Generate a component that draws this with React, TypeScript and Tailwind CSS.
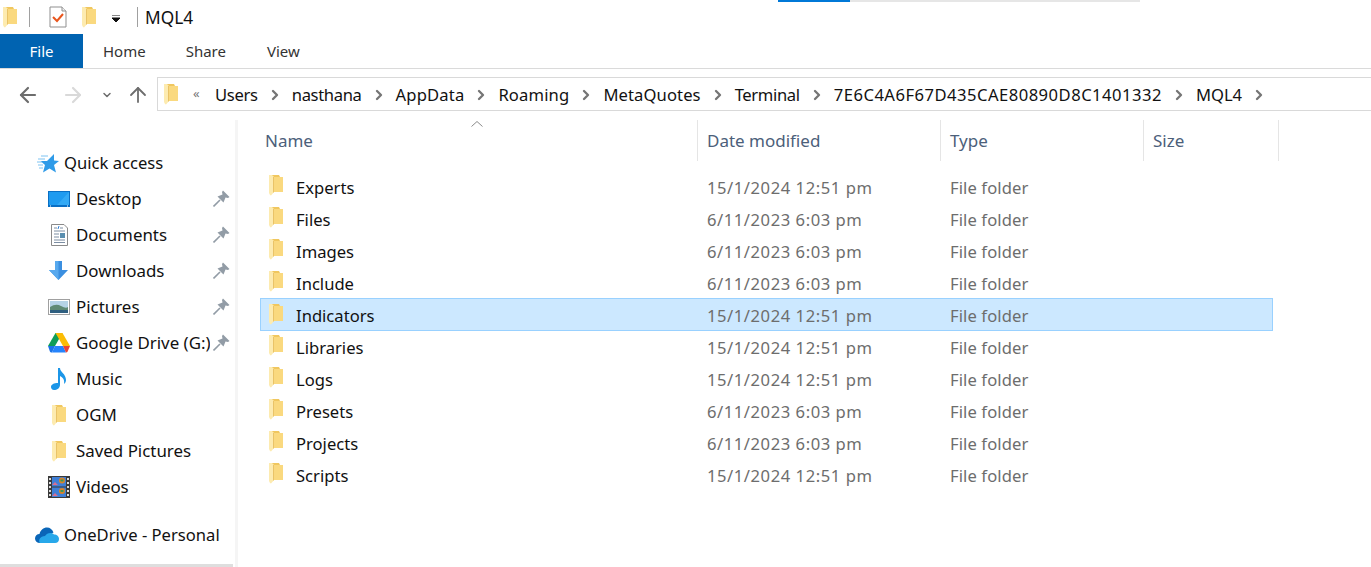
import React from 'react';
import { ArrowLeft, ArrowRight, ArrowUp, ChevronDown, ChevronRight } from 'lucide-react';

const font = "[font-family:'Noto_Sans','Open_Sans',sans-serif]";

function Folder({ className = '' }: { className?: string }) {
  return (
    <svg viewBox="0 0 14 21" className={`w-[14px] h-[21px] shrink-0 ${className}`}>
      <path d="M3 0 H10 L11 2 H14 V17 H3 Z" fill="#f0c75f" />
      <path d="M5 2 H14 V17 H5 Z" fill="#fad97f" />
      <path d="M0 0 H3 L5 2 V17 L2 20.5 L1 20 L0 18 Z" fill="#fdebb0" />
      <path d="M4 2 L5 2 V17 L4 18 Z" fill="#e9c368" />
    </svg>
  );
}

function TaskIcon() {
  return (
    <svg viewBox="0 0 18 22" className="w-[18px] h-[22px] shrink-0">
      <path d="M1 1 H13 L17 5 V21 H1 Z" fill="#fff" stroke="#8f8f8f" />
      <path d="M13 1 V5 H17" fill="#eee" stroke="#8f8f8f" />
      <path d="M4 11 L8 15 L14 8" fill="none" stroke="#e8551d" strokeWidth="2" />
    </svg>
  );
}

function StarIcon() {
  return (
    <svg viewBox="0 0 22 19" className="w-[22px] h-[19px] shrink-0">
      <path d="M17 0 L17 6.5 L22 7 L17 11 L19 18.5 L12.5 14.5 L6 18.5 L8 11 L3.5 7 L10 7 Z" fill="#2f9be8" />
      <path d="M4 2 H11 M1 5 H8 M0 8 H5 M1 11 H6 M2 14 H6" stroke="#7cc3f2" strokeWidth="1" />
    </svg>
  );
}

function DesktopIcon() {
  return (
    <svg viewBox="0 0 22 16" className="w-[22px] h-[16px] shrink-0">
      <rect width="22" height="16" fill="#0a6fc4" />
      <rect x="1" y="1" width="20" height="13" fill="#1f9bf0" />
      <path d="M9 14 L21 1 V14 Z" fill="#34aaf5" />
      <path d="M2 15 H3 M19 15 H20" stroke="#fff" />
    </svg>
  );
}

function DocumentsIcon() {
  return (
    <svg viewBox="0 0 17 22" className="w-[17px] h-[22px] shrink-0">
      <path d="M0.5 0.5 H13 L16.5 4 V21.5 H0.5 Z" fill="#fff" stroke="#8a8a8a" />
      <path d="M3 4 H6 M9 4 H12 M3 7 H14 M3 10 H8 M3 13 H8 M3 16 H14 M3 18.5 H14" stroke="#7c8ea3" />
      <path d="M7 5 L8 2" stroke="#2b7cd3" />
      <rect x="9" y="9" width="5" height="5" fill="#5a8fb0" />
    </svg>
  );
}

function DownloadsIcon() {
  return (
    <svg viewBox="0 0 20 20" className="w-[20px] h-[20px] shrink-0">
      <path d="M6 0 H13 V9 H19 L9.5 19 L0 9 H6 Z" fill="#3b8fe0" />
      <path d="M6 0 H9.5 V19 L0 9 H6 Z" fill="#58a9ee" />
    </svg>
  );
}

function PicturesIcon() {
  return (
    <svg viewBox="0 0 22 16" className="w-[22px] h-[16px] shrink-0">
      <rect x="0.5" y="0.5" width="21" height="15" fill="#fff" stroke="#a0a0a0" />
      <rect x="2" y="2" width="18" height="12" fill="#b5d3e6" />
      <path d="M2 8 Q8 4 13 7 T20 8 V14 H2 Z" fill="#5f8a74" />
      <path d="M2 11 H20 V14 H2 Z" fill="#2f5f80" />
    </svg>
  );
}

function DriveIcon() {
  return (
    <svg viewBox="0 0 22 20" className="w-[22px] h-[20px] shrink-0">
      <path d="M7.5 0 H14.5 L7 13 H0 Z" fill="#0f9d58" />
      <path d="M7.5 0 H14.5 L22 13 H15 Z" fill="#fbbc04" />
      <path d="M0 13 H7 L4 19.5 H3.2 Q2.4 19.5 2 18.8 Z" fill="#1a73e8" />
      <path d="M7 13 H15 L18 19.5 H4 Z" fill="#2684fc" />
      <path d="M15 13 H22 L19.5 18.8 Q19 19.5 18 19.5 Z" fill="#ea4335" />
    </svg>
  );
}

function MusicIcon() {
  return (
    <svg viewBox="0 0 16 22" className="w-[16px] h-[22px] shrink-0">
      <path d="M7 0 H9 C9 4 15 6 15 12 C15 14 14 15 13 16 C14 11 11 9 9 8 V17 C9 20 6 22 3 22 C1 22 0 20.5 0 19 C0 16.5 3 15 7 15 Z" fill="#1c96e8" />
    </svg>
  );
}

function VideosIcon() {
  return (
    <svg viewBox="0 0 22 22" className="w-[22px] h-[22px] shrink-0">
      <rect width="22" height="22" fill="#3a3a3a" />
      <rect x="4" y="1" width="14" height="9.5" fill="#3f7fd6" />
      <rect x="4" y="11.5" width="14" height="9.5" fill="#3f7fd6" />
      <circle cx="14" cy="4.5" r="3" fill="#d9842a" />
      <circle cx="14" cy="15" r="3" fill="#d9842a" />
      <path d="M12.5 3.5 H15.5 V5.5 H12.5 Z M12.5 14 H15.5 V16 H12.5 Z" fill="#3a9a5c" />
      <path d="M4 9 L7 6 L10 9 Z M4 20 L7 17 L10 20 Z" fill="#d86f8f" />
      <path d="M2 2 V20 M20 2 V20" stroke="#ddd" strokeWidth="2" strokeDasharray="2 2" />
    </svg>
  );
}

function CloudIcon() {
  return (
    <svg viewBox="0 0 24 16" className="w-[24px] h-[16px] shrink-0">
      <path d="M5 16 C2 16 0 14 0 11.5 C0 9 2 7 4.5 7 C5.5 3 8.5 0.5 12 0.5 C15 0.5 17.5 2.5 18.5 5.5 L10 10 Z" fill="#0a66b8" />
      <path d="M5 16 H20 C22.5 16 24 14.5 24 12 C24 9.5 22 7.5 19 7.5 C16 5 12 6 10 9 C8 9 5.5 10 4.5 12 C4 14 4 15.5 5 16 Z" fill="#28a8ea" />
    </svg>
  );
}

function PinIcon() {
  return (
    <svg viewBox="0 0 17 17" className="w-[17px] h-[17px] shrink-0">
      <path d="M10 0.5 L16.5 7 L15 8 L12.5 7.5 L10.5 12.5 L4.5 6.5 L9.5 4.5 L9 2 Z" fill="#929ca6" />
      <path d="M0.5 16.5 L7 10" stroke="#929ca6" strokeWidth="1.6" />
    </svg>
  );
}

type NavItem = { label: string; icon: React.ReactNode; pinned?: boolean };

const navItems: NavItem[] = [
  { label: 'Desktop', icon: <DesktopIcon />, pinned: true },
  { label: 'Documents', icon: <DocumentsIcon />, pinned: true },
  { label: 'Downloads', icon: <DownloadsIcon />, pinned: true },
  { label: 'Pictures', icon: <PicturesIcon />, pinned: true },
  { label: 'Google Drive (G:)', icon: <DriveIcon />, pinned: true },
  { label: 'Music', icon: <MusicIcon /> },
  { label: 'OGM', icon: <Folder /> },
  { label: 'Saved Pictures', icon: <Folder /> },
  { label: 'Videos', icon: <VideosIcon /> },
];

const crumbs = [
  { label: 'Users', cls: 'tracking-[-0.3px]' },
  { label: 'nasthana', cls: 'tracking-[-0.35px]' },
  { label: 'AppData', cls: 'tracking-[0.15px]' },
  { label: 'Roaming', cls: 'tracking-[0.15px]' },
  { label: 'MetaQuotes', cls: 'tracking-[0.1px]' },
  { label: 'Terminal', cls: 'tracking-[-0.35px]' },
  { label: '7E6C4A6F67D435CAE80890D8C1401332', cls: 'tracking-[0.48px]' },
  { label: 'MQL4', cls: '' },
];

const files = [
  { name: 'Experts', date: '15/1/2024 12:51 pm' },
  { name: 'Files', date: '6/11/2023 6:03 pm' },
  { name: 'Images', date: '6/11/2023 6:03 pm' },
  { name: 'Include', date: '6/11/2023 6:03 pm' },
  { name: 'Indicators', date: '15/1/2024 12:51 pm', selected: true },
  { name: 'Libraries', date: '15/1/2024 12:51 pm' },
  { name: 'Logs', date: '15/1/2024 12:51 pm' },
  { name: 'Presets', date: '6/11/2023 6:03 pm' },
  { name: 'Projects', date: '6/11/2023 6:03 pm' },
  { name: 'Scripts', date: '15/1/2024 12:51 pm' },
];

export default function App() {
  return (
    <div className={`relative w-[1371px] h-[567px] overflow-hidden bg-white text-[16.6px] text-[#111] ${font}`}>
      {/* copy progress strip */}
      <div className="absolute left-[778px] top-0 w-[362px] h-[2px] bg-[#e6e6e6]">
        <div className="w-[72px] h-[2px] bg-[#0078d7]" />
      </div>

      {/* title bar */}
      <div className="h-[34px] flex items-center pl-[3px]">
        <Folder />
        <div className="w-px h-[20px] bg-[#a0a0a0] ml-[12px]" />
        <div className="ml-[19px]"><TaskIcon /></div>
        <div className="ml-[15px]"><Folder /></div>
        <svg viewBox="0 0 8 7" className="w-[8px] h-[7px] ml-[16px] mt-[2px]">
          <path d="M0 0 H8 M0 3 H8 L4 7 Z" fill="#111" stroke="#111" strokeWidth="1" />
        </svg>
        <div className="w-px h-[20px] bg-[#a0a0a0] ml-[17px]" />
        <span className="ml-[7px] pt-[2px] text-[17.3px]">MQL4</span>
      </div>

      {/* ribbon tabs */}
      <div className="h-[35px] flex border-b border-[#dadada] text-[15px] text-[#333]">
        <div className="w-[83px] h-[34px] bg-[#0063b1] text-white flex items-center justify-center">File</div>
        <div className="ml-[20px] h-[34px] flex items-center">Home</div>
        <div className="ml-[40px] h-[34px] flex items-center">Share</div>
        <div className="ml-[41px] h-[34px] flex items-center">View</div>
      </div>

      {/* address row */}
      <div className="h-[51px] flex items-start pt-[8px]">
        <div className="w-[157px] h-[34px] flex items-center shrink-0 pt-[2px]">
          <ArrowLeft size={24} className="ml-[16px] text-[#6d6d6d] shrink-0" strokeWidth={2.2} />
          <ArrowRight size={24} className="ml-[21px] text-[#d9d9d9] shrink-0" strokeWidth={2.2} />
          <ChevronDown size={12} className="ml-[16px] text-[#6d6d6d] shrink-0" strokeWidth={3} />
          <ArrowUp size={24} className="ml-[13px] text-[#6d6d6d] shrink-0" strokeWidth={1.8} />
        </div>
        <div className="flex-1 h-[34px] flex items-center border-y border-l border-[#d9d9d9] pl-[6px]">
          <Folder />
          <span className="ml-[15px] w-[22px] text-[13px] text-[#777]">«</span>
          {crumbs.map((c) => (
            <div key={c.label} className="flex items-center pt-[2px]">
              <span className={c.cls}>{c.label}</span>
              <ChevronRight size={16} className="mx-[9px] text-[#757575]" strokeWidth={3.5} />
            </div>
          ))}
        </div>
      </div>

      <div className="flex h-[447px]">
        {/* nav pane */}
        <div className="relative w-[238px] shrink-0 border-r-[3px] border-[#f5f5f5] pt-[25px]">
          <div className="h-[36px] pl-[37px] flex items-center gap-[5px]">
            <StarIcon />
            <span>Quick access</span>
          </div>
          {navItems.map((item) => (
            <div key={item.label} className="h-[36px] flex items-center pl-[48px]">
              <div className="w-[22px] flex justify-center shrink-0">{item.icon}</div>
              <span className="ml-[6px] w-[134px] whitespace-nowrap overflow-hidden text-[16.9px]">{item.label}</span>
              {item.pinned && <div className="ml-[3px] mb-[2px]"><PinIcon /></div>}
            </div>
          ))}
          <div className="mt-[12px] h-[36px] pl-[35px] flex items-center gap-[5px]">
            <CloudIcon />
            <span>OneDrive - Personal</span>
          </div>
          <div className="absolute left-0 bottom-0 w-[233px] h-[3px] bg-[#dedede]" />
        </div>

        {/* file list */}
        <div className="flex-1 relative">
          <div className="h-[41px] flex text-[#4c607a] text-[17px] pl-[22px]">
            <div className="w-[438px] h-[41px] flex items-center border-r border-[#e5e5e5] pl-[5px]">Name</div>
            <div className="w-[243px] h-[41px] flex items-center border-r border-[#e5e5e5] pl-[9px]">Date modified</div>
            <div className="w-[203px] h-[41px] flex items-center border-r border-[#e5e5e5] pl-[9px]">Type</div>
            <div className="w-[135px] h-[41px] flex items-center border-r border-[#e5e5e5] pl-[9px]">Size</div>
          </div>
          <svg viewBox="0 0 12 6" className="absolute left-[233px] top-[1px] w-[12px] h-[6px]">
            <path d="M0.5 5.5 L6 0.5 L11.5 5.5" fill="none" stroke="#8a8a8a" />
          </svg>
          <div className="mt-[9px] ml-[22px] w-[1013px]">
            {files.map((f) => (
              <div
                key={f.name}
                className={`flex items-center border ${f.selected ? 'h-[33px] mb-[-1px] bg-[#cce8ff] border-[#99d1ff]' : 'h-[32px] border-transparent'}`}
              >
                <div className="w-[436px] flex items-center pl-[8px] shrink-0">
                  <Folder />
                  <span className="ml-[13px] pt-[4px]">{f.name}</span>
                </div>
                <div className="w-[243px] pl-[10px] pt-[4px] text-[#6d6d6d] shrink-0 tracking-[0.55px]">{f.date}</div>
                <div className="pl-[10px] pt-[4px] text-[#6d6d6d] tracking-[0.1px]">File folder</div>
              </div>
            ))}
          </div>
        </div>
      </div>
    </div>
  );
}
